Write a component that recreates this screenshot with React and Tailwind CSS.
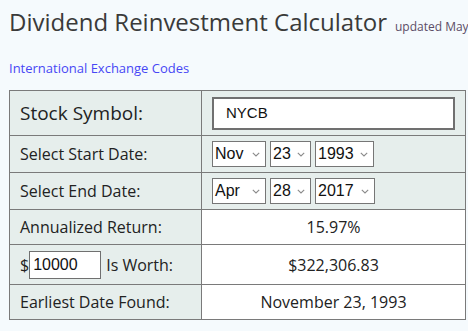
import React from "react";

const Chevron = () => (
  <svg width="8" height="5" viewBox="0 0 8 5" className="shrink-0">
    <path d="M0.8 0.8 L4 4 L7.2 0.8" fill="none" stroke="#8a8a8a" strokeWidth="1.1" />
  </svg>
);

const FakeSelect = ({ value, w }) => (
  <div
    className={`flex h-[26px] items-center justify-between border border-[#767676] bg-white pl-[2px] pr-[5px] text-[16px] text-[#111] ${w}`}
    style={{ fontFamily: '"Liberation Sans", Arial, sans-serif' }}
  >
    <span>{value}</span>
    <Chevron />
  </div>
);

export default function App() {
  return (
    <div
      className="min-h-[331px] w-[468px] overflow-hidden bg-[#f5fafd] pl-[9px] text-[#222]"
      style={{ fontFamily: '"Open Sans", sans-serif' }}
    >
      <div className="flex items-baseline whitespace-nowrap pt-[4px]">
        <h1 className="text-[24px] leading-[36px] text-[#3a3a3a]">Dividend Reinvestment Calculator</h1>
        <span className="ml-[8px] text-[12px] text-[#5b4d66]">updated May</span>
      </div>
      <div className="mt-[18px] h-[20px] text-[13px] leading-[20px] text-[#4747f5]">International Exchange Codes</div>
      <table className="mt-[12px] w-[457px] border-collapse border border-[#7a7a7a] text-[16px]">
        <tbody>
          <tr className="h-[45px]">
            <td className="w-[192px] border border-[#7a7a7a] bg-[#e6eeec] pl-[10px] text-[19px]">Stock Symbol:</td>
            <td className="border border-[#7a7a7a] bg-[#e6eeec] pl-[10px]">
              <div
                className="flex h-[33px] w-[243px] items-center border-2 border-[#707070] bg-white pl-[12px] text-[15px] text-[#111]"
                style={{ fontFamily: '"Liberation Sans", Arial, sans-serif' }}
              >
                NYCB
              </div>
            </td>
          </tr>
          <tr className="h-[37px]">
            <td className="border border-[#7a7a7a] bg-[#e6eeec] pl-[10px]">Select Start Date:</td>
            <td className="border border-[#7a7a7a] bg-[#e6eeec] pl-[10px]">
              <div className="flex gap-[4px]">
                <FakeSelect value="Nov" w="w-[54px]" />
                <FakeSelect value="23" w="w-[41px]" />
                <FakeSelect value="1993" w="w-[59px]" />
              </div>
            </td>
          </tr>
          <tr className="h-[37px]">
            <td className="border border-[#7a7a7a] bg-[#e6eeec] pl-[10px]">Select End Date:</td>
            <td className="border border-[#7a7a7a] bg-[#e6eeec] pl-[10px]">
              <div className="flex gap-[4px]">
                <FakeSelect value="Apr" w="w-[54px]" />
                <FakeSelect value="28" w="w-[41px]" />
                <FakeSelect value="2017" w="w-[60px]" />
              </div>
            </td>
          </tr>
          <tr className="h-[35px]">
            <td className="border border-[#7a7a7a] bg-[#e6eeec] pl-[10px]">Annualized Return:</td>
            <td className="border border-[#7a7a7a] bg-white text-center">15.97%</td>
          </tr>
          <tr className="h-[40px]">
            <td className="border border-[#7a7a7a] bg-[#e6eeec] pl-[10px]">
              <div className="flex items-center">
                <span>$</span>
                <div
                  className="flex h-[28px] w-[72px] items-center border border-[#707070] bg-white pl-[3px] text-[16px] text-[#111]"
                  style={{ fontFamily: '"Liberation Sans", Arial, sans-serif' }}
                >
                  10000
                </div>
                <span className="ml-[5px]">Is Worth:</span>
              </div>
            </td>
            <td className="border border-[#7a7a7a] bg-white text-center">$322,306.83</td>
          </tr>
          <tr className="h-[35px]">
            <td className="border border-[#7a7a7a] bg-[#e6eeec] pl-[10px]">Earliest Date Found:</td>
            <td className="border border-[#7a7a7a] bg-white text-center">November 23, 1993</td>
          </tr>
        </tbody>
      </table>
    </div>
  );
}
